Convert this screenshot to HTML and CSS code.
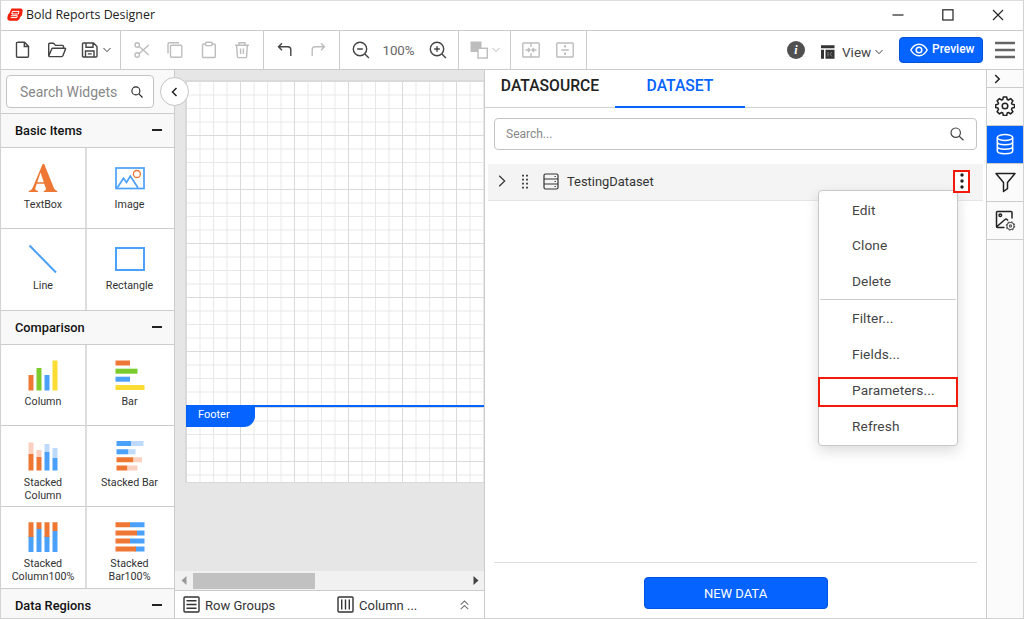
FILE: index.html
```html
<!DOCTYPE html>
<html lang="en">
<head>
<meta charset="utf-8">
<title>Bold Reports Designer</title>
<link rel="stylesheet" href="styles.css">
</head>
<body>
<div class="window">
  <header class="titlebar">
    <svg class="logo" width="16" height="14" viewBox="0 0 16 14"><path d="M4.500 .5h9.800l1.500 1.600-.9 5.400-1.900 1.800-.5 1.700-2 1.800H2L.2 10.900l.7-4.200 1.400-1.500z" fill="#f4200c"/><path d="M5.300 3.400h6.700l-.6 2.600H4.800zM4.200 7.700h6.100l-.4 1.900H3.700" fill="none" stroke="#fff" stroke-width="1"/></svg>
    <span class="app-name">Bold Reports Designer</span>
    <div class="win-buttons">
      <svg width="12" height="12" viewBox="0 0 12 12"><path d="M.5 6h11" stroke="#222" stroke-width="1.200"/></svg>
      <svg width="12" height="12" viewBox="0 0 12 12"><rect x=".8" y=".8" width="10.200" height="10.200" fill="none" stroke="#222" stroke-width="1.200"/></svg>
      <svg width="12" height="12" viewBox="0 0 12 12"><path d="M1 1l10 10M11 1L1 11" stroke="#222" stroke-width="1.100"/></svg>
    </div>
  </header>

  <div class="toolbar">
    <div class="group file">
      <svg width="20" height="20" viewBox="0 0 20 20"><path d="M4.300 2.200h7.200l4 4.200V16.200q0 1-1 1h-10q-1 0-1-1v-13q0-1 1-1zM11.300 2.500v4h4"/></svg>
      <svg width="20" height="20" viewBox="0 0 20 20"><path d="M1.700 16V4.200q0-1 1-1h3.800l2 2.200h7q1 0 1 1V8.300M1.700 16.200l3-7.200q.3-.7 1-.7h12.300q.8 0 .5.800l-2.500 6.500q-.4 1-1.400 1H2.500q-.8 0-.8-.7z"/></svg>
      <svg width="20" height="20" viewBox="0 0 20 20"><path d="M3.500 3h10l3.500 3.500V16q0 1-1 1H3.500q-1 0-1-1V4q0-1 1-1zM6 3v4.200h7V3.200M5.500 17v-6h8.500v6M7.800 13.900h4"/></svg>
      <svg class="chev" width="8" height="6" viewBox="0 0 8 6"><path d="M.5 1L4 4.700 7.500 1"/></svg>
    </div>
    <div class="group edit off">
      <svg width="20" height="20" viewBox="0 0 20 20"><circle cx="5.200" cy="5" r="2.200"/><circle cx="5.200" cy="15" r="2.200"/><path d="M7 6.300L16.800 15M7 13.700L16.800 5"/></svg>
      <svg width="20" height="20" viewBox="0 0 20 20"><path d="M14 2.700H4.500q-1.500 0-1.500 1.500V13.500"/><rect x="5.500" y="5.200" width="11.300" height="12" rx="1"/></svg>
      <svg width="20" height="20" viewBox="0 0 20 20"><rect x="3.500" y="4" width="12.800" height="13.500" rx="1"/><rect x="6.700" y="2.300" width="6.400" height="3.300" rx=".8" fill="#fff"/></svg>
      <svg width="20" height="20" viewBox="0 0 20 20"><path d="M3 5.200h14M7 5V2.700h6V5M4.600 5.300l.8 11.300q.1 1 1 1h7.200q.9 0 1-1l.8-11.300M8.600 8.500v5.500M11.400 8.500v5.500"/></svg>
    </div>
    <div class="group history">
      <svg width="20" height="20" viewBox="0 0 20 20"><path d="M7 3.200L3.500 6.700 7 10.200M3.700 6.700h9.100q3 0 3 3V16"/></svg>
      <svg class="off" width="20" height="20" viewBox="0 0 20 20"><path d="M13 3.200l3.500 3.500-3.500 3.500M16.300 6.700H7.200q-3 0-3 3V16"/></svg>
    </div>
    <div class="group zoom">
      <svg width="20" height="20" viewBox="0 0 20 20"><circle cx="9" cy="9" r="6.700"/><path d="M13.900 13.900l4 4M6.200 9h5.600"/></svg>
      <span class="pct">100%</span>
      <svg width="20" height="20" viewBox="0 0 20 20"><circle cx="9" cy="9" r="6.700"/><path d="M13.900 13.900l4 4M6.200 9h5.600M9 6.200v5.600"/></svg>
    </div>
    <div class="group order off">
      <svg width="20" height="20" viewBox="0 0 20 20"><rect x="1.500" y="1.500" width="11" height="10.500" fill="#bdbdbd" stroke="none"/><rect x="9" y="8.300" width="9.300" height="9.700" fill="#fff"/></svg>
      <svg class="chev" width="8" height="6" viewBox="0 0 8 6"><path d="M.5 1L4 4.700 7.500 1"/></svg>
    </div>
    <div class="group align off">
      <svg width="20" height="20" viewBox="0 0 20 20"><rect x="1.800" y="3" width="16.400" height="14" rx=".8"/><path d="M10 3v4M10 13v4M4.500 10h4.500M11 10h4.500M7 8l2 2-2 2M13 8l-2 2 2 2"/></svg>
      <svg width="20" height="20" viewBox="0 0 20 20"><rect x="1.800" y="3" width="16.400" height="14" rx=".8"/><path d="M6.200 10h7.600M10 5v2.500M10 12.500V15M9 6.500h2M9 13.500h2"/></svg>
    </div>
    <div class="right">
      <span class="info">i</span>
      <svg class="view-icon" width="14" height="14" viewBox="0 0 14 14"><path d="M0 .3h13.500v3H0zM0 4.700h3v9H0zM4.500 4.700h9v9h-9z" fill="#333" stroke="none"/><path d="M7 7v4.500M11 7l-2 2.200 2 2.300" stroke="#888" stroke-width=".9"/></svg>
      <span class="view">View</span>
      <svg class="chev" width="8" height="6" viewBox="0 0 8 6"><path d="M.5 1L4 4.700 7.500 1"/></svg>
      <button class="preview">
        <svg width="18" height="14" viewBox="0 0 18 14"><path d="M.8 7Q4 1.300 9 1.300T17.200 7Q14 12.700 9 12.700T.8 7z"/><circle cx="9" cy="7" r="2.800"/></svg>
        <span>Preview</span>
      </button>
      <svg class="burger" width="20" height="18" viewBox="0 0 20 18"><path d="M0 2h20M0 9h20M0 16h20"/></svg>
    </div>
  </div>

  <main class="body">
    <aside class="widgets">
      <div class="search-wrap">
        <div class="wsearch"><span>Search Widgets</span>
          <svg width="12" height="12" viewBox="0 0 12 12"><circle cx="4.900" cy="4.900" r="4" /><path d="M7.900 7.900L11.500 11.500"/></svg>
        </div>
        <button class="collapse"><svg width="7" height="10" viewBox="0 0 7 10"><path d="M5.500 1L1.500 5l4 4"/></svg></button>
      </div>
      <div class="section"><span>Basic Items</span><i class="minus"></i></div>
      <div class="grid">
        <div class="cell"><svg width="32" height="32" viewBox="0 0 32 32"><path fill="#ed7733" fill-rule="evenodd" d="M15.600 2h1.600l9.900 24.500q.9 2 3.100 2.400V30H16.700v-1.100q2.800-.3 2.200-2.300l-1.700-4.900H9.800l-1.300 3.700q-1.100 3 2.600 3.500V30H1.800v-1.100q2.900-.4 4-3.300zM13.500 10.500L10.300 20.300h6.500z"/></svg><span>TextBox</span></div>
        <div class="cell"><svg width="32" height="32" viewBox="0 0 32 32" fill="none" stroke="#4ba1f9" stroke-width="1.700"><rect x="2" y="6" width="28" height="20.500"/><path d="M3.300 25.800l6.200-9.500 3 4.200 3.800-6.500L24 25.800"/><circle cx="22.900" cy="12" r="3.500" stroke="#ed7733" stroke-width="1.300"/></svg><span>Image</span></div>
        <div class="cell"><svg width="32" height="32" viewBox="0 0 32 32"><path d="M2.500 2.500L29 29.500" stroke="#4ba1f9" stroke-width="2"/></svg><span>Line</span></div>
        <div class="cell"><svg width="32" height="32" viewBox="0 0 32 32"><rect x="2" y="5" width="28" height="22" fill="none" stroke="#4ba1f9" stroke-width="2"/></svg><span>Rectangle</span></div>
      </div>
      <div class="section"><span>Comparison</span><i class="minus"></i></div>
      <div class="grid">
        <div class="cell"><svg width="32" height="32" viewBox="0 0 32 32"><path fill="#ed7733" d="M1.500 16H6.500v15.500h-5z"/><path fill="#7acb2b" d="M9.500 9h5v22.500h-5z"/><path fill="#4ba1f9" d="M17.500 16h5v15.500h-5z"/><path fill="#fddc33" d="M25.500 1.500h5v30h-5z"/></svg><span>Column</span></div>
        <div class="cell"><svg width="32" height="32" viewBox="0 0 32 32"><path fill="#ed7733" d="M1.500 1.500H16v5H1.500z"/><path fill="#7acb2b" d="M1.500 9.700h22v5h-22z"/><path fill="#4ba1f9" d="M1.500 17.700H16v5H1.500z"/><path fill="#fddc33" d="M1.500 26h29v5h-29z"/></svg><span>Bar</span></div>
        <div class="cell"><svg width="32" height="32" viewBox="0 0 32 32"><path fill="#fad1c0" d="M1.500 2.500h5V14h-5zM9.500 10h5v7h-5z"/><path fill="#ed7733" d="M1.500 14h5v16.500h-5zM9.500 17h5v13.500h-5z"/><path fill="#bddafc" d="M17.500 4h5v8h-5zM25.500 8h5v10h-5z"/><path fill="#4ba1f9" d="M17.500 12h5v18.500h-5zM25.500 18h5v12.500h-5z"/></svg><span>Stacked<br>Column</span></div>
        <div class="cell"><svg width="32" height="32" viewBox="0 0 32 32"><path fill="#4ba1f9" d="M2.500 1H17v5H2.500zM2.500 9.200H14.500v5H2.500z"/><path fill="#bddafc" d="M17 1h12.500v5H17zM14.500 9.200h7v5h-7z"/><path fill="#ed7733" d="M2.500 17.200h17v5h-17zM2.500 25.500h11v5h-11z"/><path fill="#fad1c0" d="M19.500 17.200H28v5h-8.500zM13.500 25.500h10v5h-10z"/></svg><span>Stacked Bar</span></div>
        <div class="cell"><svg width="32" height="32" viewBox="0 0 32 32"><path fill="#4ba1f9" d="M1.500 15h5v16h-5zM9.500 8h5v23h-5zM17.500 15h5v16h-5zM25.500 10h5v21h-5z"/><path fill="#ed7733" d="M1.500 1.200h5V16h-5zM9.500 1.200h5V8h-5zM17.500 1.200h5V16h-5zM25.500 1.200h5V10h-5z"/></svg><span>Stacked<br>Column100%</span></div>
        <div class="cell"><svg width="32" height="32" viewBox="0 0 32 32"><path fill="#4ba1f9" d="M16 1.200h14.500v5H16zM23 9.500h7.500v5H23zM16 17.500h14.500v5H16zM21 25.500h9.500v5H21z"/><path fill="#ed7733" d="M1.500 1.200H16v5H1.500zM1.500 9.500H23v5H1.500zM1.500 17.500H16v5H1.500zM1.500 25.500H22v5H1.500z"/></svg><span>Stacked<br>Bar100%</span></div>
      </div>
      <div class="section last"><span>Data Regions</span><i class="minus"></i></div>
    </aside>

    <section class="design">
      <div class="canvas">
        <div class="page">
          <div class="report-body"></div>
          <div class="report-footer"><span>Footer</span></div>
        </div>
      </div>
      <div class="scroll">
        <svg width="6" height="9" viewBox="0 0 6 9"><path d="M5.500 0v9L.5 4.500z" fill="#999"/></svg>
        <div class="thumb"></div>
        <svg width="6" height="9" viewBox="0 0 6 9"><path d="M.5 0v9l5-4.500z" fill="#444"/></svg>
      </div>
      <div class="groups">
        <svg width="17" height="17" viewBox="0 0 17 17"><rect x="1" y="1" width="15" height="15" rx="1"/><path d="M3.500 4.700h10M3.500 8.500h10M3.500 12.300h10"/></svg>
        <span class="row-groups">Row Groups</span>
        <svg width="17" height="17" viewBox="0 0 17 17"><rect x="1" y="1" width="15" height="15" rx="1"/><path d="M4.700 3.500v10M8.500 3.500v10M12.300 3.500v10"/></svg>
        <span class="col-groups">Column ...</span>
        <svg class="up" width="9" height="10" viewBox="0 0 9 10"><path d="M.7 4.700L4.500 1l3.800 3.700M.7 9.200l3.800-3.700 3.800 3.700"/></svg>
      </div>
    </section>

    <section class="data">
      <nav class="tabs"><span class="tab">DATASOURCE</span><span class="tab active">DATASET</span></nav>
      <div class="dsearch"><span>Search...</span>
        <svg width="14" height="14" viewBox="0 0 14 14"><circle cx="5.700" cy="5.700" r="4.700"/><path d="M9.200 9.200L13.500 13.300"/></svg>
      </div>
      <div class="dataset">
        <svg width="8" height="12" viewBox="0 0 8 12"><path d="M1.200.7L6.700 6l-5.500 5.300"/></svg>
        <svg class="grip" width="8" height="15" viewBox="0 0 8 15"><path d="M2 .8v14M6 .8v14"/></svg>
        <svg class="table" width="16" height="17" viewBox="0 0 16 17"><rect x="1" y="1" width="14" height="15" rx="1.500"/><path d="M1 6h14M1 11h14M11.500 3.500h1.300M11.500 8.500h1.300M11.500 13.500h1.300"/></svg>
        <span class="name">TestingDataset</span>
        <div class="more"><svg width="4" height="16" viewBox="0 0 4 16"><circle cx="2" cy="2" r="1.700"/><circle cx="2" cy="8" r="1.700"/><circle cx="2" cy="14" r="1.700"/></svg>
          <div class="menu">
            <div>Edit</div><div>Clone</div><div>Delete</div>
            <hr>
            <div>Filter...</div><div>Fields...</div><div class="marked">Parameters...</div><div>Refresh</div>
          </div>
        </div>
      </div>
      <footer class="data-foot"><button>NEW DATA</button></footer>
    </section>

    <nav class="rail">
      <div class="expand"><svg width="7" height="10" viewBox="0 0 7 10"><path d="M1.200 1l4 4-4 4"/></svg></div>
      <div><svg width="20" height="20" viewBox="0 0 20 20"><circle cx="10" cy="10" r="2.800"/><path d="M8.300 1h3.400l.5 2.500 1.200.5 2.200-1.400 2.300 2.300-1.400 2.200.5 1.200 2.500.5v2.800l-2.500.5-.5 1.300 1.400 2.200-2.300 2.300-2.200-1.400-1.200.5-.5 2.500H8.300l-.5-2.500-1.200-.5-2.200 1.400-2.300-2.300 1.400-2.200-.5-1.300-2.300-.5V8.800L3 8.300l.5-1.200-1.400-2.200 2.300-2.300L6.600 4l1.200-.5z" stroke-linejoin="round"/></svg></div>
      <div class="on"><svg width="22" height="22" viewBox="0 0 22 22"><ellipse cx="11" cy="4.500" rx="7.700" ry="3"/><path d="M3.300 4.500v13.200q0 3 7.700 3t7.700-3V4.500M3.300 8.800q0 3 7.700 3t7.700-3M3.300 13.200q0 3 7.700 3t7.700-3"/></svg></div>
      <div><svg width="22" height="22" viewBox="0 0 22 22"><path d="M2 2.500h19L13.500 11.500v6.200L9.500 20.500v-9z" stroke-linejoin="round"/></svg></div>
      <div><svg width="22" height="22" viewBox="0 0 22 22"><path d="M18 9.500V3.500q0-1-1-1H3.500q-1 0-1 1v14q0 1 1 1h7M3 17.500l8-7q1-.8 2 0l1 1"/><circle cx="6.300" cy="6.300" r="1.300"/><g stroke="#555" stroke-width="1.100"><circle cx="16.500" cy="17" r="3.500"/><circle cx="16.500" cy="17" r="1.100"/><circle cx="16.500" cy="17" r="4.200" stroke-dasharray="1.600 1.700"/></g></svg></div>
    </nav>
  </main>
</div>
</body>
</html>
```
FILE: styles.css
```css
* { box-sizing: border-box; }
body { margin: 0; font-family: Roboto, "Liberation Sans", sans-serif; color: #333; background: #fff; }
button { font: inherit; border: 0; padding: 0; }
svg { display: block; flex: none; fill: none; }
.window { width: 1024px; height: 619px; overflow: hidden; display: flex; flex-direction: column; border: 1px solid #d2d2d2; border-top-color: #dcdcdc; }

.titlebar { height: 30px; flex: none; display: flex; align-items: center; padding: 0 19px 2px 6px; border-bottom: 1px solid #ccc; }
.app-name { font: 12.400px "Open Sans", "Noto Sans", sans-serif; color: #222; margin-left: 3px; white-space: nowrap; }
.win-buttons { margin-left: auto; display: flex; gap: 38px; }

.toolbar { height: 39px; flex: none; display: flex; border-bottom: 1px solid #ccc; }
.toolbar svg { stroke: #444; stroke-width: 1.400; }
.toolbar .off svg, .toolbar svg.off { stroke: #bdbdbd; }
.toolbar svg.chev { stroke-width: 1; }
.group { display: flex; align-items: center; border-right: 1px solid #ccc; flex: none; }
.file { width: 120px; padding-left: 12px; gap: 13.500px; }
.file .chev { margin-left: -10.500px; }
.edit { width: 143px; padding-left: 11px; gap: 13.400px; }
.history { width: 76px; padding-left: 11px; gap: 13px; }
.zoom { width: 119px; padding-left: 11px; }
.pct { font-size: 13.300px; color: #666; width: 55px; text-align: center; }
.zoom svg:last-child { margin-left: 2px; }
.order { width: 52px; padding-left: 10px; gap: 3px; }
.align { width: 76px; padding-left: 10px; gap: 14px; }
.right { flex: 1; display: flex; align-items: center; justify-content: flex-end; padding-right: 8px; }
.info { width: 18px; height: 18px; border-radius: 50%; background: #505050; color: #fff; font: italic bold 12px/18px "Liberation Serif", serif; text-align: center; margin-right: 16px; }
.toolbar .view-icon { margin-top: 3px; }
.view { font-size: 13.500px; color: #444; margin: 3px 5px 0 7px; width: 28px; }
.right .chev { margin-top: 4px; }
.preview { width: 84px; height: 26px; margin-left: 16px; border-radius: 4px; border: 1px solid #0052d9; background: #0563ff; color: #fff; font-size: 12px; font-weight: 500; display: flex; align-items: center; padding-left: 10px; gap: 4px; }
.preview span { padding-bottom: 2px; }
.toolbar .preview svg { stroke: #fff; stroke-width: 1.500; }
.toolbar .burger { margin-left: 12px; stroke: #666; stroke-width: 2.600; }

.body { flex: 1; display: flex; min-height: 0; }

.widgets { width: 174px; flex: none; border-right: 1px solid #ccc; background: #f9f9f9; }
.search-wrap { height: 43px; padding: 5px; display: flex; align-items: flex-start; position: relative; }
.wsearch { width: 148px; height: 33px; border: 1px solid #c4c4c4; border-radius: 4px; background: #fff; display: flex; align-items: center; justify-content: space-between; padding: 0 10px 0 13px; font-size: 14px; color: #888; white-space: nowrap; }
.wsearch svg { stroke: #222; stroke-width: 1.100; }
.collapse { position: absolute; z-index: 2; left: 159px; top: 7px; width: 29px; height: 29px; border-radius: 50%; border: 1px solid #c4c4c4; background: #fff; display: flex; align-items: center; justify-content: center; }
.collapse svg, .expand svg { stroke: #222; stroke-width: 1.500; }
.section { height: 35px; border: 1px solid #ccc; border-width: 1px 0; display: flex; align-items: center; justify-content: space-between; padding: 0 12px 1px 14px; font-size: 12.800px; font-weight: 500; color: #111; background: #f8f8f8; }
.section.last { border-bottom: 0; padding-bottom: 2px; }
.minus { width: 10px; height: 1.500px; background: #222; }
.grid { display: grid; grid-template-columns: 86px 87px; grid-auto-rows: 81px; }
.cell { background: #fff; border-bottom: 1px solid #ccc; display: flex; flex-direction: column; align-items: center; padding-top: 14px; font-size: 10.700px; line-height: 13px; text-align: center; }
.cell:nth-child(odd) { border-right: 2px solid #ddd; }
.cell:nth-child(even) { padding-right: 2px; }
.cell span { margin-top: 4px; }
.cell:nth-last-child(-n+2) { border-bottom: 0; }

.design { width: 310px; flex: none; display: flex; flex-direction: column; border-right: 1px solid #ccc; }
.canvas { flex: 1; background: #e6e6e6; padding: 10px 0 0 10px; }
.page { border: 1px solid #d9d9d9; border-right: 0; height: 403px; }
.report-body, .report-footer {
  background-color: #fff;
  background-image: linear-gradient(90deg, transparent 53px, #dadada 53px), linear-gradient(transparent 53px, #dadada 53px), linear-gradient(90deg, transparent 12.500px, #e8e8e8 12.500px), linear-gradient(transparent 12.500px, #e8e8e8 12.500px);
  background-size: 54px 54px, 54px 54px, 13.500px 13.500px, 13.500px 13.500px;
  background-position: 1px 1px;
}
.report-body { height: 324px; }
.report-footer { height: 77px; border-top: 2px solid #0563ff; }
.report-footer span { display: block; width: 69px; height: 20px; background: #0563ff; color: #fff; font-size: 11px; line-height: 15px; padding-left: 12px; border-radius: 0 0 11px 0; }
.scroll { height: 19px; background: #f1f1f1; display: flex; align-items: center; padding: 0 5px 0 6px; }
.thumb { width: 122px; height: 16px; background: #c1c1c1; margin: 0 auto 0 6px; }
.groups { height: 28px; border-top: 1px solid #ccc; display: flex; align-items: center; padding-left: 8px; font-size: 13px; color: #333; }
.groups svg { stroke: #333; stroke-width: 1.400; }
.groups span { padding-top: 2px; margin-left: 5px; }
.row-groups { width: 132px; }
.col-groups { width: 101px; }
.groups svg.up { stroke: #777; stroke-width: 1.100; }

.data { width: 501px; flex: none; display: flex; flex-direction: column; background: #fff; }
.tabs { height: 38px; flex: none; display: flex; border-bottom: 1px solid #d0d0d0; font-size: 15.700px; font-weight: 500; line-height: 31px; text-align: center; color: #222; }
.tab { width: 130px; height: 38px; }
.tab.active { color: #0563ff; border-bottom: 2px solid #0563ff; }
.dsearch { height: 32px; flex: none; margin: 10px 9px 0; border: 1px solid #c4c4c4; border-radius: 4px; display: flex; align-items: center; justify-content: space-between; padding: 0 12px 1px 11px; font-size: 12px; color: #888; }
.dsearch svg { stroke: #444; stroke-width: 1.200; }
.dataset { height: 37px; flex: none; margin: 14px 3px 0; background: #f4f4f4; border-bottom: 1px solid #e6e6e6; display: flex; align-items: center; padding: 0 0 2px 10px; }
.dataset svg { stroke: #333; stroke-width: 1.200; }
.dataset .grip { margin-left: 15px; stroke-width: 1.800; stroke-dasharray: 1.800 2.200; }
.dataset .table { margin-left: 14px; }
.name { font-size: 12.900px; margin-left: 8px; color: #333; }
.more { position: relative; width: 17px; height: 23px; margin: 0 13px 0 auto; display: flex; align-items: center; justify-content: center; background: #fff; }
.more::after { content: ""; position: absolute; z-index: 4; inset: 0; border: 2px solid #f3190b; }
.dataset .more svg { fill: #222; stroke: none; }
.menu { position: absolute; z-index: 3; right: 12px; top: 20px; width: 140px; height: 256px; background: #fff; border: 1px solid #c8c8c8; border-radius: 4px; box-shadow: 0 5px 14px rgba(0,0,0,.14); padding-top: 1px; font-size: 13.700px; letter-spacing: .1px; line-height: 36px; color: #444; }
.menu div { height: 35.900px; padding-left: 33px; }
.menu hr { border: 0; height: 1px; margin: 0 1px; background: #ccc; }
.menu .marked { margin: 5px -1px 1px; height: 30px; line-height: 22px; padding-left: 32px; border: 2px solid #f3190b; }
.data-foot { margin: auto 9px 0; border-top: 1px solid #ddd; height: 56px; padding-top: 14px; display: flex; justify-content: center; }
.data-foot button { width: 184px; height: 32px; background: #0563ff; border: 1px solid #0052e0; border-radius: 4px; color: #fff; font-size: 13px; }

.rail { flex: 1; border-left: 1px solid #ccc; background: #fbfbfb; }
.rail div { height: 38px; border-bottom: 1px solid #ccc; display: flex; align-items: center; justify-content: center; padding-bottom: 2px; }
.rail div.expand { height: 18px; justify-content: flex-start; padding: 0 0 0 7px; }
.rail svg { stroke: #222; stroke-width: 1.500; }
.rail .on { background: #0563ff; }
.rail .on svg { stroke: #fff; }
```
